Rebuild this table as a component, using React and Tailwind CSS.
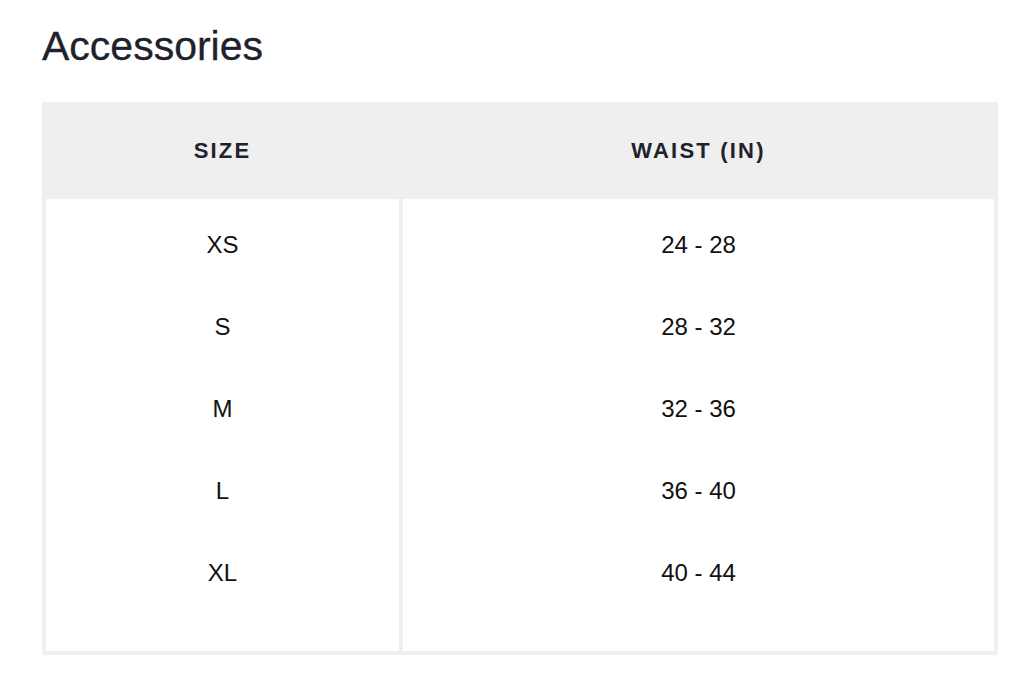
const rows = [
  { size: 'XS', waist: '24 - 28' },
  { size: 'S', waist: '28 - 32' },
  { size: 'M', waist: '32 - 36' },
  { size: 'L', waist: '36 - 40' },
  { size: 'XL', waist: '40 - 44' }
]

const App = () => {
  return (
    <div className="min-h-[680px] bg-white pl-[42px] pr-[32px] pt-[21px] font-['Liberation_Sans',Arial,sans-serif]">
      <h1 className="text-[41px] leading-[50px] text-[#1e222d] [-webkit-text-stroke:0.3px_#1e222d]">Accessories</h1>

      <div className="mt-[31px] w-[956px] border-4 border-[#efefef]">
        <div className="grid grid-cols-[353px_4px_591px] h-[93px] pb-[4px] bg-[#efefef] items-center text-[22px] font-bold tracking-[2.2px] text-[#1e222d]">
          <div className="text-center">SIZE</div>
          <div />
          <div className="text-center">WAIST (IN)</div>
        </div>

        <div className="grid grid-cols-[357px_591px]">
          <div className="border-r-4 border-[#efefef] pt-[5px] pb-[37px]">
            {rows.map(row => (
              <div key={row.size} className="h-[82px] flex items-center justify-center text-[24px] text-[#111]">
                {row.size}
              </div>
            ))}
          </div>
          <div className="pt-[5px] pb-[37px]">
            {rows.map(row => (
              <div key={row.size} className="h-[82px] flex items-center justify-center text-[24px] text-[#111]">
                {row.waist}
              </div>
            ))}
          </div>
        </div>
      </div>
    </div>
  )
}

export default App
